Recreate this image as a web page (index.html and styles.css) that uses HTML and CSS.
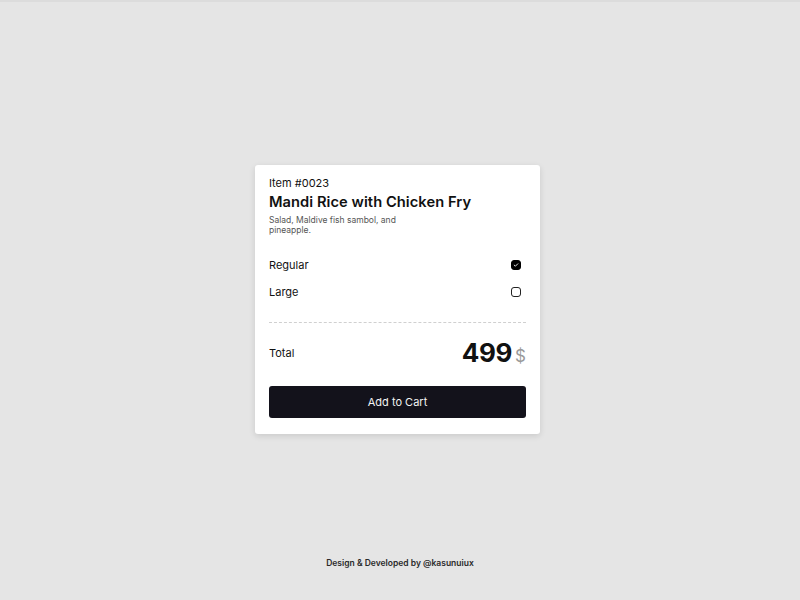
FILE: index.html
```html
<!DOCTYPE html>
<html lang="en">
<head>
<meta charset="utf-8">
<title>Mandi Rice</title>
<link rel="stylesheet" href="styles.css">
</head>
<body>
<div class="page">
  <div class="spacer"></div>
  <div class="card">
    <div class="item-no">Item #0023</div>
    <h1 class="title">Mandi Rice with Chicken Fry</h1>
    <p class="desc">Salad, Maldive fish sambol, and pineapple.</p>
    <div class="options">
      <label class="option">
        <span>Regular</span>
        <span class="box checked">
          <svg viewBox="0 0 10 10" width="6" height="6"><path d="M2 5.2 L4 7 L8 3" fill="none" stroke="#fff" stroke-width="1.5" stroke-linecap="round" stroke-linejoin="round"/></svg>
        </span>
      </label>
      <label class="option">
        <span>Large</span>
        <span class="box"></span>
      </label>
    </div>
    <div class="divider"></div>
    <div class="total">
      <span class="total-label">Total</span>
      <span class="price"><span class="amount">499</span><span class="currency">$</span></span>
    </div>
    <button class="cart-btn">Add to Cart</button>
  </div>
  <div class="footer">Design &amp; Developed by @kasunuiux</div>
</div>
</body>
</html>
```
FILE: styles.css
```css
html, body {
  margin: 0;
  padding: 0;
}
body {
  background: #e5e5e5;
  font-family: Inter, "Liberation Sans", sans-serif;
  color: #111;
  box-shadow: inset 0 2px 0 #dcdcdc;
}
.page {
  height: 600px;
  display: grid;
  grid-template-rows: 1fr auto 1fr;
  justify-items: center;
}
.card {
  width: 257px;
  margin-right: 5px;
  margin-bottom: 2px;
  background: #fff;
  border-radius: 3px;
  box-shadow: 0 2px 6px rgba(0,0,0,0.12);
  padding: 11px 14px 16px 14px;
}
.item-no {
  font-size: 11px;
  line-height: 14px;
}
.title {
  margin: 2px 0 0 0;
  font-size: 14.7px;
  line-height: 20px;
  font-weight: 600;
  letter-spacing: 0.05px;
}
.desc {
  margin: 3px 0 0 0;
  font-size: 8.5px;
  line-height: 10px;
  color: #555;
  max-width: 140px;
}
.options {
  margin-top: 21px;
  display: flex;
  flex-direction: column;
  gap: 9px;
}
.option {
  display: flex;
  justify-content: space-between;
  align-items: center;
  font-size: 11px;
  height: 18px;
  padding-right: 5px;
}
.box {
  width: 8px;
  height: 8px;
  border: 1px solid #222;
  border-radius: 3px;
  display: flex;
  align-items: center;
  justify-content: center;
}
.box.checked {
  background: #000;
  border-color: #000;
}
.divider {
  margin-top: 21px;
  border-top: 1px dashed #d0d0d0;
}
.total {
  margin-top: 14px;
  display: flex;
  justify-content: space-between;
  align-items: center;
  height: 32px;
}
.total-label {
  font-size: 11px;
}
.price {
  display: flex;
  align-items: baseline;
  gap: 3px;
}
.amount {
  font-size: 26px;
  font-weight: 700;
  letter-spacing: -0.3px;
}
.currency {
  font-size: 17px;
  color: #9a9a9a;
}
.cart-btn {
  margin-top: 17px;
  display: block;
  width: 100%;
  height: 32px;
  border: none;
  border-radius: 3px;
  background: #13121b;
  color: #f2f2f2;
  font-family: Inter, "Liberation Sans", sans-serif;
  font-size: 11px;
}
.footer {
  align-self: end;
  padding-bottom: 32px;
  font-size: 8.5px;
  font-weight: 600;
  color: #2a2a2a;
}
```
